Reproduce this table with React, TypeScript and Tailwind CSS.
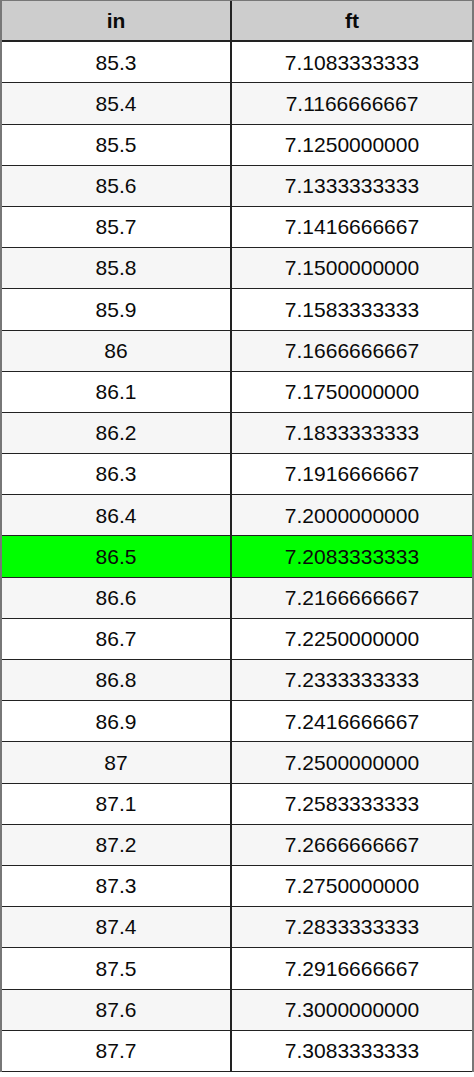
const rows: Array<[string, string]> = [
  ["85.3", "7.1083333333"],
  ["85.4", "7.1166666667"],
  ["85.5", "7.1250000000"],
  ["85.6", "7.1333333333"],
  ["85.7", "7.1416666667"],
  ["85.8", "7.1500000000"],
  ["85.9", "7.1583333333"],
  ["86", "7.1666666667"],
  ["86.1", "7.1750000000"],
  ["86.2", "7.1833333333"],
  ["86.3", "7.1916666667"],
  ["86.4", "7.2000000000"],
  ["86.5", "7.2083333333"],
  ["86.6", "7.2166666667"],
  ["86.7", "7.2250000000"],
  ["86.8", "7.2333333333"],
  ["86.9", "7.2416666667"],
  ["87", "7.2500000000"],
  ["87.1", "7.2583333333"],
  ["87.2", "7.2666666667"],
  ["87.3", "7.2750000000"],
  ["87.4", "7.2833333333"],
  ["87.5", "7.2916666667"],
  ["87.6", "7.3000000000"],
  ["87.7", "7.3083333333"],
]

export default function App() {
  return (
    <div className="w-[474px] h-[1077px] bg-white font-['Liberation_Sans',Arial,sans-serif] text-[21px] text-[#0a0a0a]">
      <div className="border-x-2 border-t border-[#777]">
        {/* header */}
        <div className="flex h-[41.2px] border-b-2 border-[#222] bg-[#cdcdcd] font-bold">
          <div className="w-[230px] flex items-center justify-center border-r-2 border-[#222]">in</div>
          <div className="flex-1 flex items-center justify-center">ft</div>
        </div>

        {rows.map(([inch, ft], i) => {
          const highlight = inch === "86.5"
          return (
            <div
              key={inch}
              className={
                "flex h-[41.2px] border-b border-[#222] " +
                (highlight ? "bg-[#00ff00]" : i % 2 === 0 ? "bg-white" : "bg-[#f6f6f6]")
              }
            >
              <div className="w-[230px] flex items-center justify-center border-r-2 border-[#222]">{inch}</div>
              <div className="flex-1 flex items-center justify-center">{ft}</div>
            </div>
          )
        })}
      </div>
    </div>
  )
}
